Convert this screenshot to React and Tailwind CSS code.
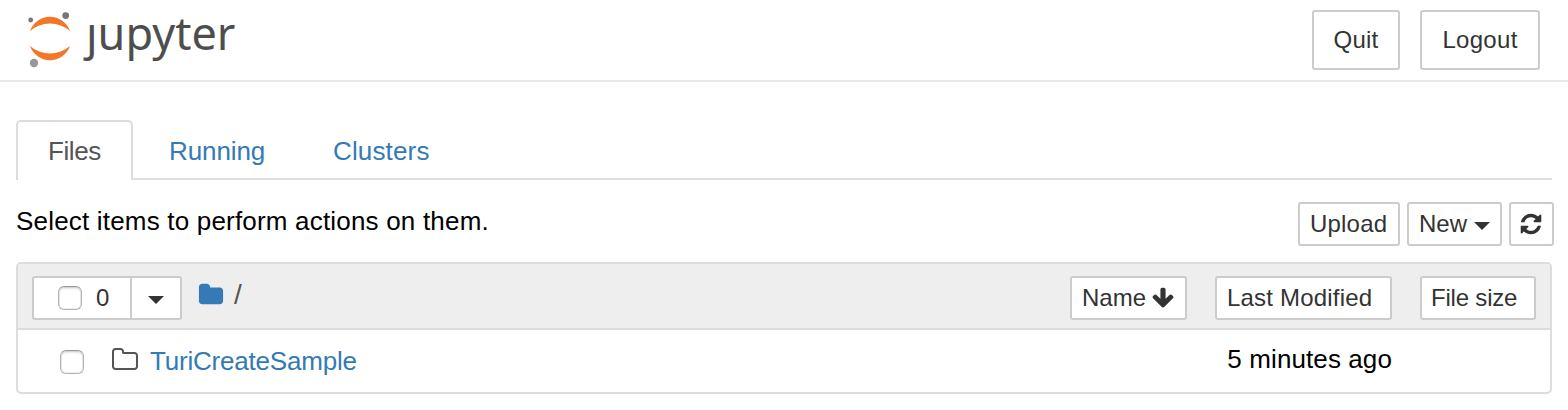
import React, { useState } from 'react';

const ICONS = {
    refresh: 'M1639 1056q0 5-1 7-64 268-268 434.5t-478 166.5q-146 0-282.5-55t-243.5-157l-129 129q-19 19-45 19t-45-19-19-45v-448q0-26 19-45t45-19h448q26 0 45 19t19 45-19 45l-137 137q71 66 161 102t187 36q134 0 250-65t186-179q11-17 53-117 8-23 30-23h192q13 0 22.5 9.5t9.5 22.5zm25-800v448q0 26-19 45t-45 19h-448q-26 0-45-19t-19-45 19-45l138-138q-148-137-349-137-134 0-250 65t-186 179q-11 17-53 117-8 23-30 23h-199q-13 0-22.5-9.5t-9.5-22.5v-7q65-268 270-434.5t480-166.5q146 0 284 55.5t245 156.5l130-129q19-19 45-19t45 19 19 45z',
    arrowDown: 'M1675 832q0 53-37 90l-651 652q-39 37-91 37-53 0-90-37l-651-652q-38-36-38-90 0-53 38-91l74-75q39-37 91-37 53 0 90 37l294 294v-704q0-52 38-90t90-38h128q52 0 90 38t38 90v704l294-294q37-37 90-37 52 0 91 37l75 75q37 39 37 91z',
    folder: 'M1728 608v704q0 92-66 158t-158 66h-1216q-92 0-158-66t-66-158v-960q0-92 66-158t158-66h320q92 0 158 66t66 158v32h672q92 0 158 66t66 158z',
    folderOpen: 'M1600 1312v-704q0-40-28-68t-68-28h-704q-40 0-68-28t-28-68v-64q0-40-28-68t-68-28h-320q-40 0-68 28t-28 68v960q0 40 28 68t68 28h1216q40 0 68-28t28-68zm128-704v704q0 92-66 158t-158 66h-1216q-92 0-158-66t-66-158v-960q0-92 66-158t158-66h320q92 0 158 66t66 158v32h672q92 0 158 66t66 158z',
};

const TABS = [
    { id: 'files', name: 'Files', className: 'w-[117px] pl-8 tracking-[-0.4px]' },
    { id: 'running', name: 'Running', className: 'w-[164px] pl-9 tracking-[-0.1px]' },
    { id: 'clusters', name: 'Clusters', className: 'w-[164px] pl-9 tracking-[0.15px]' },
];

const Icon = ({ name, className }) => (
    <svg viewBox="0 0 1792 1792" className={`shrink-0 fill-current ${className}`}>
        <path d={ICONS[name]} />
    </svg>
);

const Caret = ({ className = '' }) => (
    <svg viewBox="0 0 16 8" className={`w-4 h-2 shrink-0 fill-current ${className}`}>
        <path d="M0 0h16L8 8z" />
    </svg>
);

const Logo = () => (
    <div className="flex items-start">
        <svg viewBox="26 10 48 60" className="w-12 h-[60px] mt-2.5 shrink-0">
            <path d="M30 31A21.2 21.2 0 0 1 70 31A30.4 30.4 0 0 0 30 31z" fill="#f37726" />
            <path d="M30 46A21.2 21.2 0 0 0 70 46A30.4 30.4 0 0 1 30 46z" fill="#f37726" />
            <circle cx="30.7" cy="20" r="2.4" fill="#767677" />
            <circle cx="65.7" cy="15.6" r="3.4" fill="#767677" />
            <circle cx="34" cy="63" r="4.2" fill="#989798" />
        </svg>
        <span className="ml-3 mt-[3px] h-[60px] leading-[60px] text-[45px] text-[#4e4e4e] font-['Noto_Sans',sans-serif]">ȷupyter</span>
    </div>
);

const Button = ({ className, children, ...props }) => (
    <button
        className={`flex items-center shrink-0 whitespace-nowrap rounded-[3px] border-2 border-[#ccc] bg-white text-[#333] ${className}`}
        {...props}
    >
        {children}
    </button>
);

const Checkbox = ({ className = '', ...props }) => (
    <input
        type="checkbox"
        className={`appearance-none w-6 h-6 shrink-0 rounded-[6px] border border-[#b4b4b4] border-t-[#999] bg-white shadow-[inset_0_2px_2px_rgba(0,0,0,0.1),inset_0_0_0_1px_rgba(0,0,0,0.08)] ${className}`}
        {...props}
    />
);

const App = () => {
    const [activeTab, setActiveTab] = useState('files');
    const [selected, setSelected] = useState(false);

    return (
        <div className="h-[410px] overflow-hidden bg-white text-black font-['Liberation_Sans',Arial,sans-serif]">
            {/* Header */}
            <header className="flex items-start justify-between h-[82px] pl-[26px] pr-7 border-b-2 border-[#e7e7e7]">
                <Logo />
                <div className="flex gap-5 pt-2.5">
                    <Button className="w-[88px] h-[60px] justify-center text-2xl tracking-[0.2px]">Quit</Button>
                    <Button className="w-[120px] h-[60px] justify-center text-2xl tracking-[0.3px]">Logout</Button>
                </div>
            </header>

            <main className="px-4 pt-[38px]">
                {/* Tabs */}
                <nav className="flex h-[60px] text-[26px]">
                    {TABS.map((tab) => (
                        <button
                            key={tab.id}
                            onClick={() => setActiveTab(tab.id)}
                            className={`flex items-center ${tab.className} ${
                                activeTab === tab.id
                                    ? 'pt-px -indent-0.5 rounded-t-[5px] border-2 border-b-0 border-[#ddd] text-[#555]'
                                    : 'pt-[5px] border-b-2 border-[#ddd] text-[#337ab7]'
                            }`}
                        >
                            {tab.name}
                        </button>
                    ))}
                    <div className="flex-1 border-b-2 border-[#ddd]" />
                </nav>

                {/* Toolbar */}
                <div className="flex items-start justify-between h-[82px] pt-[22px] -mr-0.5">
                    <p className="text-[26px] leading-[38px] tracking-[0.19px]">Select items to perform actions on them.</p>
                    <div className="flex gap-[7px] text-2xl">
                        <Button className="w-[102px] h-11 pl-2.5 tracking-[0.2px]">Upload</Button>
                        <Button className="w-[95px] h-11 pl-2.5">
                            New
                            <Caret className="ml-[7px] mt-[3px]" />
                        </Button>
                        <Button className="w-[45px] h-11 pl-2" title="Refresh list">
                            <Icon name="refresh" className="w-6 h-6" />
                        </Button>
                    </div>
                </div>

                {/* File list */}
                <section className="h-[132px] border-2 border-[#ddd] rounded-[5px] overflow-hidden">
                    <div className="flex items-start h-[66px] pt-3 pl-[14px] pr-[14px] bg-[#eee] border-b-2 border-[#ddd] text-2xl">
                        <div className="flex">
                            <Button className="w-[100px] h-11 pl-6 rounded-r-none">
                                <Checkbox checked={selected} onChange={() => setSelected(!selected)} />
                                <span className="ml-[14px]">{selected ? 1 : 0}</span>
                            </Button>
                            <Button className="w-[52px] h-11 -ml-0.5 justify-center rounded-l-none">
                                <Caret className="mt-[3px]" />
                            </Button>
                        </div>
                        <Icon name="folder" className="w-[26px] h-[26px] ml-4 mt-1.5 text-[#337ab7]" />
                        <span className="ml-[10px] text-[28px] leading-[38px] text-[#555]">/</span>
                        <div className="flex ml-auto">
                            <Button className="w-[117px] h-11 pl-2.5">
                                Name
                                <Icon name="arrowDown" className="w-6 h-6 ml-[5px]" />
                            </Button>
                            <Button className="w-[177px] h-11 ml-7 pl-2.5 tracking-[0.2px]">Last Modified</Button>
                            <Button className="w-[116px] h-11 ml-7 pl-[9px] tracking-[-0.2px]">File size</Button>
                        </div>
                    </div>
                    <div className="flex items-center h-[62px] pl-[42px] pr-[158px] text-[26px]">
                        <Checkbox className="mt-0.5" checked={selected} onChange={() => setSelected(!selected)} />
                        <Icon name="folderOpen" className="w-7 h-7 ml-[27px] -mt-0.5 text-[#555]" />
                        <a className="ml-[11px] tracking-[-0.2px] text-[#337ab7]">TuriCreateSample</a>
                        <span className="ml-auto -mt-1 tracking-[0.1px]">5 minutes ago</span>
                    </div>
                </section>
            </main>
        </div>
    );
};

export default App;
